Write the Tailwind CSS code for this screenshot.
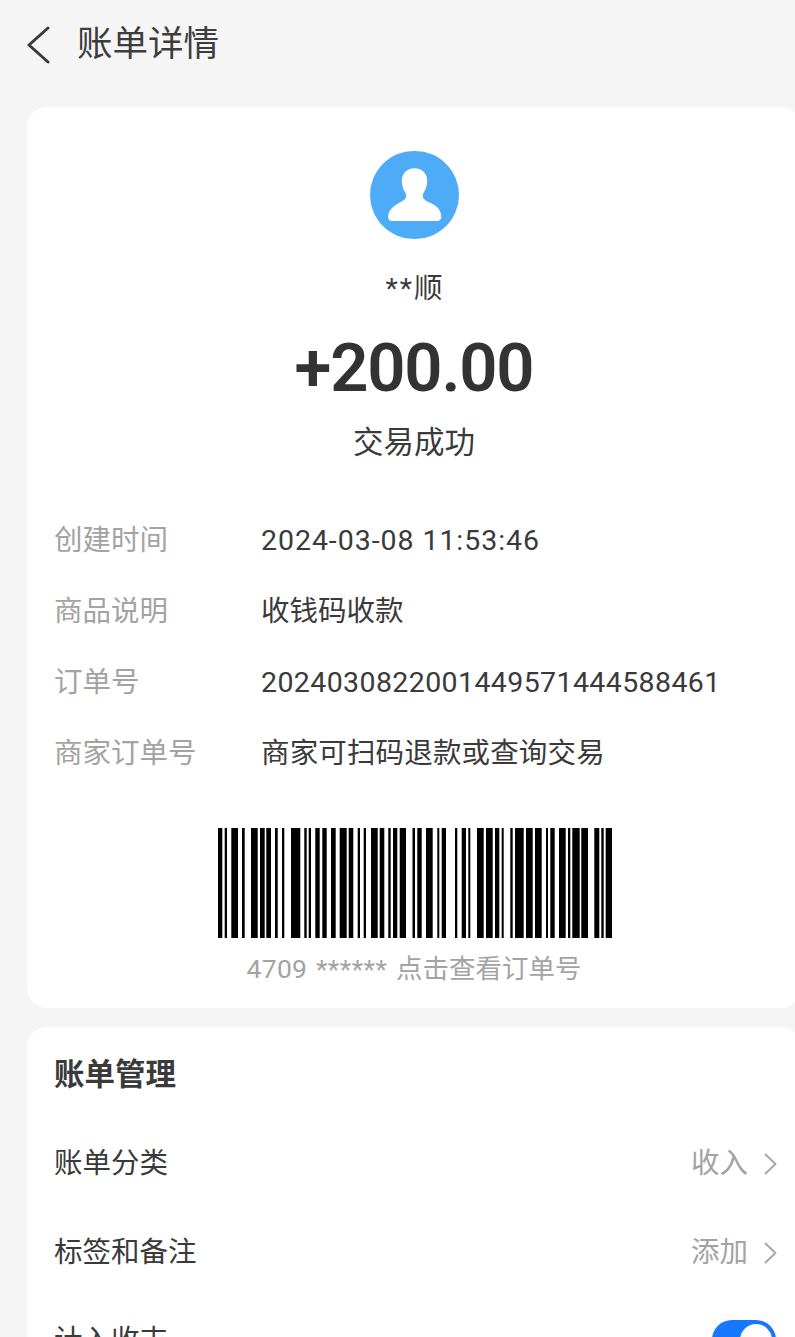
<!DOCTYPE html>
<html lang="zh-CN">
<head>
    <meta charset="UTF-8">
    <meta name="viewport" content="width=device-width, initial-scale=1.0">
    <script src="https://cdn.jsdelivr.net/npm/@tailwindcss/browser@4"></script>
</head>
<body class="bg-[#f5f5f5] font-['Roboto','Noto_Sans_CJK_SC',sans-serif] text-[#3a3a3a]">
<div class="h-[1337px] overflow-hidden">

    <header class="h-[86px] pt-[4px] mb-[21px] pl-[27px] flex items-center">
        <svg class="w-[24px] h-[38px]" viewBox="0 0 24 38" fill="none" stroke="#3a3a3a" stroke-width="3" stroke-linecap="round" stroke-linejoin="round">
            <path d="M21 2 L2 19 L21 36"/>
        </svg>
        <h1 class="ml-[26px] mb-[3px] text-[35.5px] leading-[44px] text-[#3d3d3d]">账单详情</h1>
    </header>

    <section class="w-[774px] ml-[27px] h-[901px] bg-white rounded-[20px] pt-[44px] flex flex-col items-center">
        <div class="w-[89px] h-[88px] rounded-full bg-[#4dabf7]">
            <svg class="w-[89px] h-[88px]" viewBox="0 0 88 88" fill="#fff">
                <path d="M44 17.3C51 17.3 56.7 22 56.7 30C56.7 36 54 40 52.5 43C51.5 46 53 48 56 50C62 53 70.7 56 70.7 65.5C70.7 68.5 69 70 66.5 70H21.5C19 70 17.7 68.5 17.7 65.5C17.7 58 26 53 32 50C35 48 36.5 46 35.5 43C34 40 31.3 36 31.3 30C31.3 22 37 17.3 44 17.3Z"/>
            </svg>
        </div>
        <p class="mt-[30px] text-[28.5px] leading-[40px]"><span class="tracking-[2px]">**</span>顺</p>
        <p class="mt-[18px] text-[67px] leading-[82px] font-semibold text-[#333] tracking-[-1.2px]">+200.00</p>
        <p class="mt-[12px] text-[30.5px] leading-[44px]">交易成功</p>

        <dl class="mt-[56px] w-full pl-[27px] text-[28.5px] leading-[40px] flex flex-col gap-[31px]">
            <div class="flex"><dt class="w-[207px] text-[#a3a3a3]">创建时间</dt><dd class="tracking-[0.95px]">2024-03-08 11:53:46</dd></div>
            <div class="flex"><dt class="w-[207px] text-[#a3a3a3]">商品说明</dt><dd>收钱码收款</dd></div>
            <div class="flex"><dt class="w-[207px] text-[#a3a3a3]">订单号</dt><dd class="tracking-[0.4px]">2024030822001449571444588461</dd></div>
            <div class="flex"><dt class="w-[207px] text-[#a3a3a3]">商家订单号</dt><dd class="tracking-[0.15px]">商家可扫码退款或查询交易</dd></div>
        </dl>

        <svg class="mt-[54px] ml-[1px] w-[394px] h-[110px]" viewBox="218 0 394 110" fill="#000">
            <path d="M218 0h4.3v110h-4.3zM224.7 0h2.3v110h-2.3zM231.3 0h6.7v110h-6.7zM242 0h2.7v110h-2.7zM251 0h6.7v110h-6.7zM260 0h4.7v110h-4.7zM266.3 0h4.7v110h-4.7zM275 0h2.7v110h-2.7zM282 0h2.3v110h-2.3zM291 0h9.3v110h-9.3zM304.3 0h2.4v110h-2.4zM308.7 0h2.3v110h-2.3zM315.3 0h4.4v110h-4.4zM322.3 0h4.4v110h-4.4zM331 0h4.7v110h-4.7zM339.7 0h7v110h-7zM348.7 0h4.6v110h-4.6zM357.7 0h2.3v110h-2.3zM363.7 0h2.3v110h-2.3zM371 0h6.7v110h-6.7zM379.7 0h4.6v110h-4.6zM388.3 0h2.4v110h-2.4zM393 0h4.3v110h-4.3zM399.7 0h6.3v110h-6.3zM412.5 0h2.5v110h-2.5zM417.3 0h4.4v110h-4.4zM426 0h6.7v110h-6.7zM437.3 0h2v110h-2zM441.7 0h4.3v110h-4.3zM455 0h2.3v110h-2.3zM461.7 0h4.3v110h-4.3zM468.3 0h2v110h-2zM477 0h6.7v110h-6.7zM486 0h6.7v110h-6.7zM495 0h4.3v110h-4.3zM501.7 0h2v110h-2zM510.3 0h2.4v110h-2.4zM515 0h8.7v110h-8.7zM526 0h6.7v110h-6.7zM535 0h6.7v110h-6.7zM546 0h2v110h-2zM550.3 0h4.4v110h-4.4zM559 0h6.7v110h-6.7zM568 0h2.3v110h-2.3zM572.3 0h7.4v110h-7.4zM581.3 0h6.7v110h-6.7zM594.3 0h5v110h-5zM601.3 0h2.4v110h-2.4zM605.7 0h6.3v110h-6.3z"/>
        </svg>
        <p class="mt-[13px] text-[26.5px] leading-[36px] text-[#a3a3a3]"><span class="tracking-[0.3px]">4709</span> <span class="mx-[2px] tracking-[0.5px]">******</span> 点击查看订单号</p>
    </section>

    <section class="w-[774px] ml-[27px] mt-[19px] bg-white rounded-t-[20px] pl-[27px] pr-[24px] pt-[28px] text-[28.5px] leading-[40px]">
        <h2 class="text-[30.5px] font-bold leading-[40px]">账单管理</h2>
        <div class="mt-[49px] flex justify-between items-center">
            <span>账单分类</span>
            <span class="flex items-center text-[#a3a3a3]">收入
                <svg class="ml-[16px] w-[13px] h-[22px]" viewBox="0 0 13 22" fill="none" stroke="#a8a8a8" stroke-width="2" stroke-linecap="round" stroke-linejoin="round"><path d="M1.5 1.5 L11.5 11 L1.5 20.5"/></svg>
            </span>
        </div>
        <div class="mt-[49px] flex justify-between items-center">
            <span>标签和备注</span>
            <span class="flex items-center text-[#a3a3a3]">添加
                <svg class="ml-[16px] w-[13px] h-[22px]" viewBox="0 0 13 22" fill="none" stroke="#a8a8a8" stroke-width="2" stroke-linecap="round" stroke-linejoin="round"><path d="M1.5 1.5 L11.5 11 L1.5 20.5"/></svg>
            </span>
        </div>
        <div class="mt-[47px] flex justify-between items-start">
            <span class="pt-[1px]">计入收支</span>
            <span class="w-[64px] h-[40px] mr-[1px] rounded-full bg-[#1677ff] flex items-center justify-end pr-[4px]">
                <span class="w-[32px] h-[32px] rounded-full bg-white"></span>
            </span>
        </div>
    </section>
</div>
</body>
</html>
